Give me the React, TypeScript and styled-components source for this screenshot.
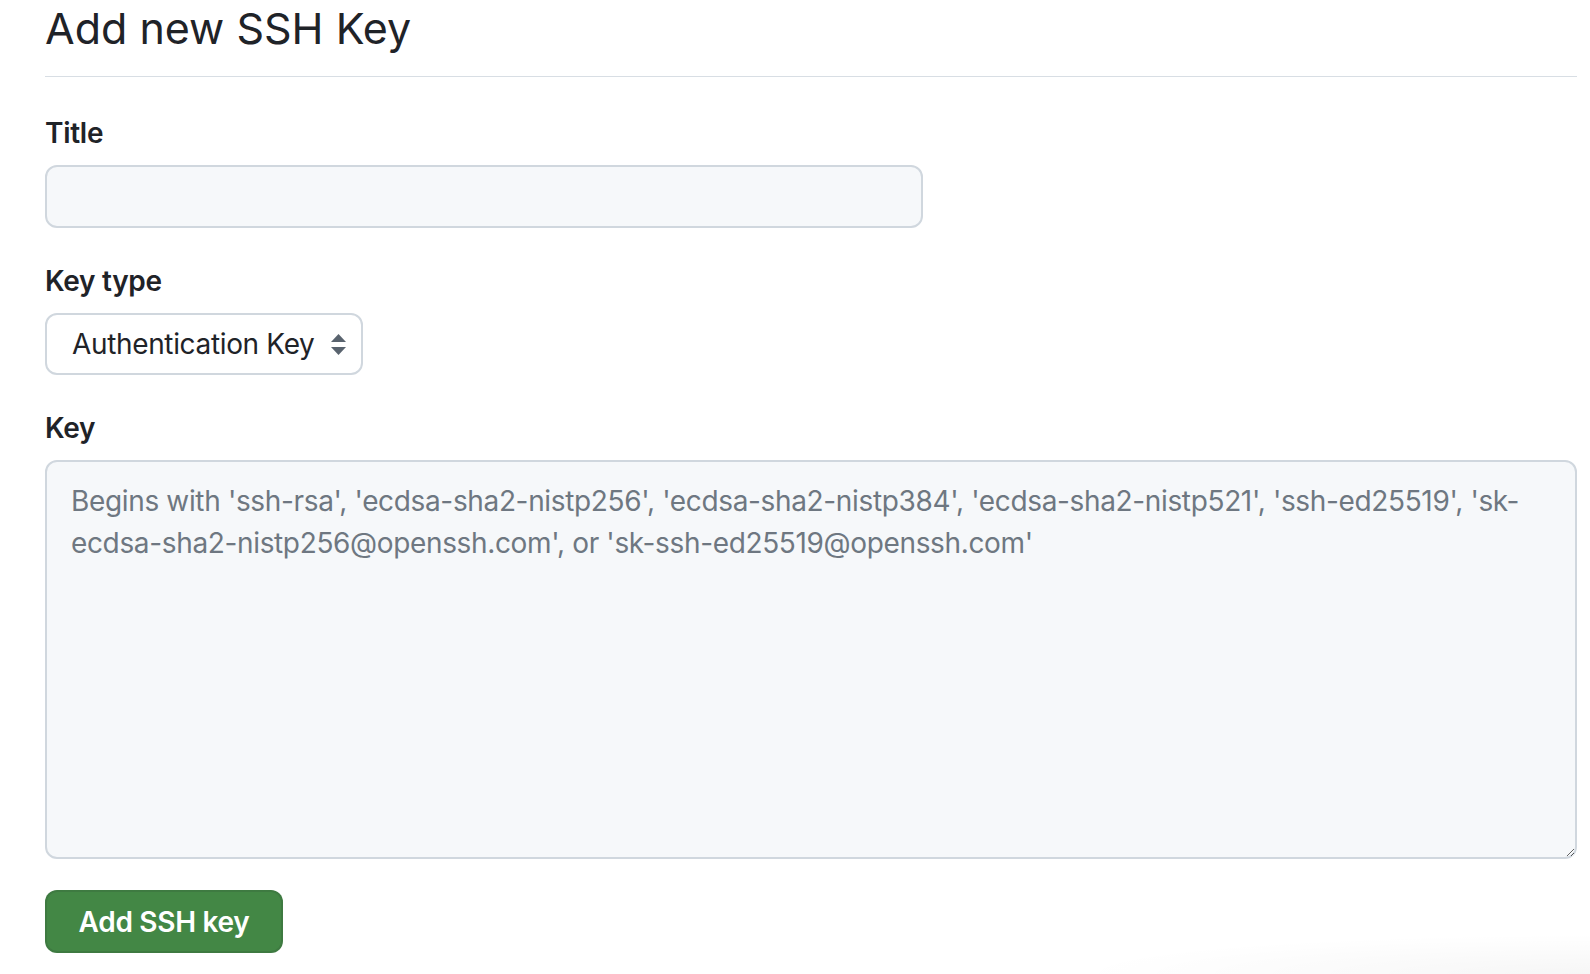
import React from "react";
import styled, { createGlobalStyle } from "styled-components";

const GlobalStyle = createGlobalStyle`
  html, body {
    margin: 0;
    padding: 0;
    background: #ffffff;
  }
  body {
    font-family: Inter, "Liberation Sans", sans-serif;
    color: #1f2328;
    min-height: 974px;
    background:
      radial-gradient(ellipse 520px 40px at 100% 100%, rgba(0, 0, 0, 0.035), rgba(0, 0, 0, 0) 100%),
      #ffffff;
  }
`;

const Page = styled.div`
  padding: 2px 13px 0 45px;
`;

const Subhead = styled.div`
  padding-bottom: 22px;
  border-bottom: 1px solid #d8dee4;
  margin-bottom: 35px;
`;

const Heading = styled.h2`
  margin: 0;
  font-size: 43px;
  line-height: 52px;
  font-weight: 400;
  color: #1f2328;
`;

const FormGroup = styled.div`
  margin-bottom: 32px;
`;

const Label = styled.label`
  display: block;
  font-size: 28px;
  line-height: 42px;
  font-weight: 600;
  letter-spacing: -0.3px;
  margin-bottom: 11px;
`;

const TextInput = styled.input`
  display: block;
  box-sizing: border-box;
  width: 878px;
  height: 63px;
  padding: 0 24px;
  font: inherit;
  font-size: 28px;
  background: #f6f8fa;
  border: 2px solid #d0d7de;
  border-radius: 12px;
  outline: none;
`;

const SelectWrap = styled.div`
  position: relative;
  display: inline-block;
`;

const Select = styled.select`
  appearance: none;
  box-sizing: border-box;
  width: 318px;
  height: 62px;
  padding: 0 28px 0 25px;
  font-family: inherit;
  font-size: 28px;
  letter-spacing: -0.35px;
  color: #1f2328;
  background: #ffffff;
  border: 2px solid #d0d7de;
  border-radius: 12px;
  outline: none;
`;

const SelectIcon = styled.svg`
  position: absolute;
  right: 17px;
  top: 21px;
  pointer-events: none;
`;

const TextArea = styled.textarea`
  display: block;
  box-sizing: border-box;
  width: 100%;
  height: 399px;
  padding: 18px 24px;
  font-family: inherit;
  font-size: 28px;
  line-height: 42px;
  letter-spacing: -0.35px;
  color: #1f2328;
  background: #f6f8fa;
  border: 2px solid #d0d7de;
  border-radius: 12px;
  outline: none;
  resize: vertical;

  &::placeholder {
    color: #6e7781;
  }
`;

const SubmitButton = styled.button`
  display: block;
  box-sizing: border-box;
  height: 63px;
  width: 238px;
  margin-top: 31px;
  font-family: inherit;
  font-size: 28px;
  font-weight: 600;
  letter-spacing: -0.3px;
  color: #ffffff;
  background: #438745;
  border: 2px solid rgba(31, 35, 40, 0.12);
  border-radius: 12px;
  cursor: pointer;
`;

export default function App() {
  return (
    <>
      <GlobalStyle />
      <Page>
        <Subhead>
          <Heading>Add new SSH Key</Heading>
        </Subhead>
        <form onSubmit={(e) => e.preventDefault()}>
          <FormGroup>
            <Label htmlFor="ssh_title">Title</Label>
            <TextInput id="ssh_title" type="text" />
          </FormGroup>
          <FormGroup>
            <Label htmlFor="ssh_type">Key type</Label>
            <SelectWrap>
              <Select id="ssh_type" defaultValue="auth">
                <option value="auth">Authentication Key</option>
                <option value="signing">Signing Key</option>
              </Select>
              <SelectIcon width="15" height="21" viewBox="0 0 15 21">
                <path d="M7.5 0 L15 8 L0 8 Z" fill="#59636e" />
                <path d="M0 13 L15 13 L7.5 21 Z" fill="#59636e" />
              </SelectIcon>
            </SelectWrap>
          </FormGroup>
          <div>
            <Label htmlFor="ssh_key">Key</Label>
            <TextArea
              id="ssh_key"
              placeholder="Begins with 'ssh-rsa', 'ecdsa-sha2-nistp256', 'ecdsa-sha2-nistp384', 'ecdsa-sha2-nistp521', 'ssh-ed25519', 'sk-ecdsa-sha2-nistp256@openssh.com', or 'sk-ssh-ed25519@openssh.com'"
            />
          </div>
          <SubmitButton type="submit">Add SSH key</SubmitButton>
        </form>
      </Page>
    </>
  );
}
